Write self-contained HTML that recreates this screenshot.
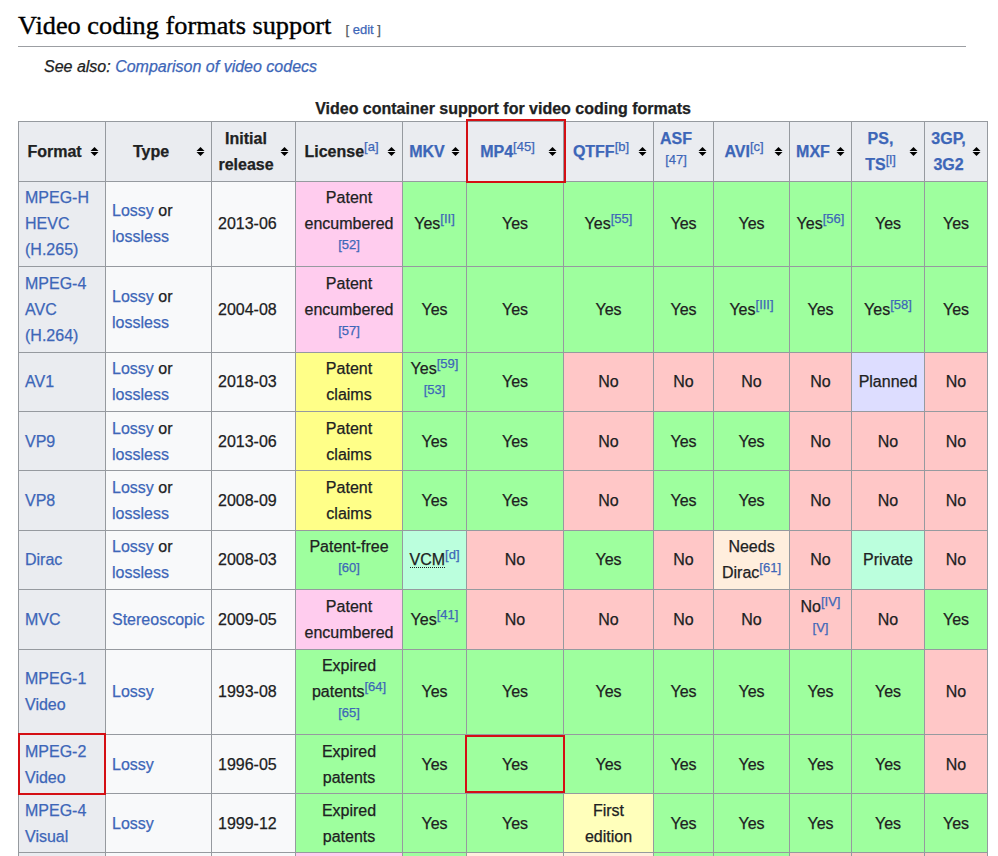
<!DOCTYPE html>
<html><head><meta charset="utf-8">
<style>
html,body{margin:0;padding:0;background:#fff;}
body{width:998px;height:856px;overflow:hidden;position:relative;font-family:"Liberation Sans",sans-serif;color:#202122;font-size:16px;-webkit-text-stroke:0.25px currentColor;}
a{color:#3d66b8;text-decoration:none;}
.h2{position:absolute;left:18px;top:6px;width:948px;height:40px;border-bottom:1px solid #9c9fa3;font-family:"Liberation Serif",serif;font-size:24.3px;color:#000;white-space:nowrap;}
.h2 .t{position:absolute;left:0;top:5.2px;line-height:30px;transform:scaleX(1.083);transform-origin:0 0;-webkit-text-stroke:0.35px #000;}
.edit{position:absolute;left:327.5px;top:16px;font-family:"Liberation Sans",sans-serif;font-size:13px;line-height:15px;color:#54595d;}
.see{position:absolute;left:44px;top:54px;font-style:italic;font-size:16px;line-height:26px;}
.cap{position:absolute;left:18px;width:970px;top:97px;text-align:center;font-weight:bold;font-size:16px;line-height:24px;}
table{position:absolute;left:18px;top:121px;border-collapse:collapse;table-layout:fixed;background:#f8f9fa;}
td,th{border:1px solid #969a9f;padding:0 6px;line-height:26px;font-size:16px;vertical-align:middle;}
th{background:#eaecf0;text-align:center;}
thead th{padding:0 21px 0 6px;position:relative;}
thead th i{position:absolute;right:0;top:50%;margin-top:-4.5px;width:21px;height:9px;}
thead th i svg{display:block;}
td{text-align:center;}
td.l{text-align:left;}
th.r{text-align:left;font-weight:normal;}
sup{font-size:13px;line-height:1;vertical-align:5.6px;font-weight:normal;}
.y{background:#9eff9e;}
.n{background:#ffc7c7;}
.pe{background:#ffccee;}
.pc{background:#ffff88;}
.pl{background:#ddddff;}
.pr{background:#bbffdd;}
.dp{background:#ffeedd;}
.fe{background:#ffffbb;}
.sh td,.sh th{padding-top:2px;padding-bottom:0;}
.abbr{position:relative;}
.abbr:after{content:"";position:absolute;left:1px;right:0;bottom:0px;border-bottom:1px dotted #202122;}
.box{position:absolute;border:2px solid #d40f14;box-sizing:border-box;}
</style></head><body>
<div class="h2"><span class="t">Video coding formats support</span><span class="edit">[ <a>edit</a> ]</span></div>
<div class="see">See also: <a>Comparison of video codecs</a></div>
<div class="cap">Video container support for video coding formats</div>
<table>
<colgroup><col style="width:87px"><col style="width:106px"><col style="width:84px"><col style="width:107px"><col style="width:64px"><col style="width:97px"><col style="width:90px"><col style="width:60px"><col style="width:76px"><col style="width:62px"><col style="width:73px"><col style="width:63px"></colgroup>
<thead><tr style="height:60px"><th>Format<i><svg width="21" height="9" viewBox="0 0 21 9"><path d="m14.5 5-4 4-4-4zm0-1-4-4-4 4z" fill="#000"/></svg></i></th><th>Type<i><svg width="21" height="9" viewBox="0 0 21 9"><path d="m14.5 5-4 4-4-4zm0-1-4-4-4 4z" fill="#000"/></svg></i></th><th>Initial<br>release<i><svg width="21" height="9" viewBox="0 0 21 9"><path d="m14.5 5-4 4-4-4zm0-1-4-4-4 4z" fill="#000"/></svg></i></th><th>License<sup><a>[a]</a></sup><i><svg width="21" height="9" viewBox="0 0 21 9"><path d="m14.5 5-4 4-4-4zm0-1-4-4-4 4z" fill="#000"/></svg></i></th><th><a>MKV</a><i><svg width="21" height="9" viewBox="0 0 21 9"><path d="m14.5 5-4 4-4-4zm0-1-4-4-4 4z" fill="#000"/></svg></i></th><th><a>MP4</a><sup><a>[45]</a></sup><i><svg width="21" height="9" viewBox="0 0 21 9"><path d="m14.5 5-4 4-4-4zm0-1-4-4-4 4z" fill="#000"/></svg></i></th><th><a>QTFF</a><sup><a>[b]</a></sup><i><svg width="21" height="9" viewBox="0 0 21 9"><path d="m14.5 5-4 4-4-4zm0-1-4-4-4 4z" fill="#000"/></svg></i></th><th><a>ASF</a><br><sup><a>[47]</a></sup><i><svg width="21" height="9" viewBox="0 0 21 9"><path d="m14.5 5-4 4-4-4zm0-1-4-4-4 4z" fill="#000"/></svg></i></th><th><a>AVI</a><sup><a>[c]</a></sup><i><svg width="21" height="9" viewBox="0 0 21 9"><path d="m14.5 5-4 4-4-4zm0-1-4-4-4 4z" fill="#000"/></svg></i></th><th><a>MXF</a><i><svg width="21" height="9" viewBox="0 0 21 9"><path d="m14.5 5-4 4-4-4zm0-1-4-4-4 4z" fill="#000"/></svg></i></th><th><a>PS,</a><br><a>TS</a><sup><a>[l]</a></sup><i><svg width="21" height="9" viewBox="0 0 21 9"><path d="m14.5 5-4 4-4-4zm0-1-4-4-4 4z" fill="#000"/></svg></i></th><th><a>3GP,</a><br><a>3G2</a><i><svg width="21" height="9" viewBox="0 0 21 9"><path d="m14.5 5-4 4-4-4zm0-1-4-4-4 4z" fill="#000"/></svg></i></th></tr></thead>
<tbody>
<tr style="height:85px"><th class="r"><a>MPEG-H<br>HEVC<br>(H.265)</a></th><td class="l"><a>Lossy</a> or<br><a>lossless</a></td><td class="l">2013-06</td><td class="pe">Patent<br>encumbered<br><sup><a>[52]</a></sup></td><td class="y">Yes<sup><a>[II]</a></sup></td><td class="y">Yes</td><td class="y">Yes<sup><a>[55]</a></sup></td><td class="y">Yes</td><td class="y">Yes</td><td class="y">Yes<sup><a>[56]</a></sup></td><td class="y">Yes</td><td class="y">Yes</td></tr>
<tr style="height:86px"><th class="r"><a>MPEG-4<br>AVC<br>(H.264)</a></th><td class="l"><a>Lossy</a> or<br><a>lossless</a></td><td class="l">2004-08</td><td class="pe">Patent<br>encumbered<br><sup><a>[57]</a></sup></td><td class="y">Yes</td><td class="y">Yes</td><td class="y">Yes</td><td class="y">Yes</td><td class="y">Yes<sup><a>[III]</a></sup></td><td class="y">Yes</td><td class="y">Yes<sup><a>[58]</a></sup></td><td class="y">Yes</td></tr>
<tr style="height:59px"><th class="r"><a>AV1</a></th><td class="l"><a>Lossy</a> or<br><a>lossless</a></td><td class="l">2018-03</td><td class="pc">Patent<br>claims</td><td class="y">Yes<sup><a>[59]</a></sup><br><sup><a>[53]</a></sup></td><td class="y">Yes</td><td class="n">No</td><td class="n">No</td><td class="n">No</td><td class="n">No</td><td class="pl">Planned</td><td class="n">No</td></tr>
<tr style="height:59px" class="sh"><th class="r"><a>VP9</a></th><td class="l"><a>Lossy</a> or<br><a>lossless</a></td><td class="l">2013-06</td><td class="pc">Patent<br>claims</td><td class="y">Yes</td><td class="y">Yes</td><td class="n">No</td><td class="y">Yes</td><td class="y">Yes</td><td class="n">No</td><td class="n">No</td><td class="n">No</td></tr>
<tr style="height:60px"><th class="r"><a>VP8</a></th><td class="l"><a>Lossy</a> or<br><a>lossless</a></td><td class="l">2008-09</td><td class="pc">Patent<br>claims</td><td class="y">Yes</td><td class="y">Yes</td><td class="n">No</td><td class="y">Yes</td><td class="y">Yes</td><td class="n">No</td><td class="n">No</td><td class="n">No</td></tr>
<tr style="height:59px"><th class="r"><a>Dirac</a></th><td class="l"><a>Lossy</a> or<br><a>lossless</a></td><td class="l">2008-03</td><td class="y">Patent-free<br><sup><a>[60]</a></sup></td><td class="pr"><span class="abbr">VCM</span><sup><a>[d]</a></sup></td><td class="n">No</td><td class="y">Yes</td><td class="n">No</td><td class="dp">Needs<br>Dirac<sup><a>[61]</a></sup></td><td class="n">No</td><td class="pr">Private</td><td class="n">No</td></tr>
<tr style="height:60px"><th class="r"><a>MVC</a></th><td class="l"><a>Stereoscopic</a></td><td class="l">2009-05</td><td class="pe">Patent<br>encumbered</td><td class="y">Yes<sup><a>[41]</a></sup></td><td class="n">No</td><td class="n">No</td><td class="n">No</td><td class="n">No</td><td class="n">No<sup><a>[IV]</a></sup><br><sup><a>[V]</a></sup></td><td class="n">No</td><td class="y">Yes</td></tr>
<tr style="height:85px"><th class="r"><a>MPEG-1<br>Video</a></th><td class="l"><a>Lossy</a></td><td class="l">1993-08</td><td class="y">Expired<br>patents<sup><a>[64]</a></sup><br><sup><a>[65]</a></sup></td><td class="y">Yes</td><td class="y">Yes</td><td class="y">Yes</td><td class="y">Yes</td><td class="y">Yes</td><td class="y">Yes</td><td class="y">Yes</td><td class="n">No</td></tr>
<tr style="height:59px" class="sh"><th class="r"><a>MPEG-2<br>Video</a></th><td class="l"><a>Lossy</a></td><td class="l">1996-05</td><td class="y">Expired<br>patents</td><td class="y">Yes</td><td class="y">Yes</td><td class="y">Yes</td><td class="y">Yes</td><td class="y">Yes</td><td class="y">Yes</td><td class="y">Yes</td><td class="n">No</td></tr>
<tr style="height:59px" class="sh"><th class="r"><a>MPEG-4<br>Visual</a></th><td class="l"><a>Lossy</a></td><td class="l">1999-12</td><td class="y">Expired<br>patents</td><td class="y">Yes</td><td class="y">Yes</td><td class="fe">First<br>edition</td><td class="y">Yes</td><td class="y">Yes</td><td class="y">Yes</td><td class="y">Yes</td><td class="y">Yes</td></tr>
<tr style="height:60px"><th class="r"><a>H.263</a></th><td class="l"><a>Lossy</a></td><td class="l">1996-03</td><td class="pe">Patent<br>encumbered</td><td class="y">Yes</td><td class="dp"></td><td class="dp"></td><td class="y">Yes</td><td class="y">Yes</td><td class="n">No</td><td class="n">No</td><td class="n">No</td></tr>
</tbody></table>
<div class="box" style="left:466px;top:119px;width:100px;height:64px"></div>
<div class="box" style="left:18px;top:733px;width:88px;height:62px"></div>
<div class="box" style="left:465px;top:735px;width:100px;height:58px"></div>
</body></html>
